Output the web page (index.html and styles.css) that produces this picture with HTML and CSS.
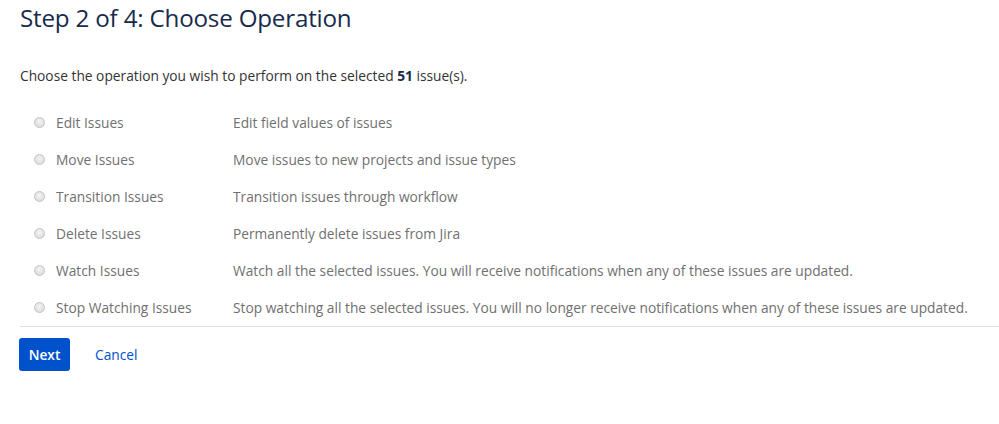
FILE: index.html
```html
<!DOCTYPE html>
<html>
<head>
<meta charset="utf-8">
<link rel="stylesheet" href="styles.css">
</head>
<body>
<div class="page">
  <h1 class="title">Step 2 of 4: Choose Operation</h1>
  <p class="intro">Choose the operation you wish to perform on the selected <strong>51</strong> issue(s).</p>
  <div class="ops">
    <div class="op"><span class="radio"></span><span class="label">Edit Issues</span><span class="desc">Edit field values of issues</span></div>
    <div class="op"><span class="radio"></span><span class="label">Move Issues</span><span class="desc">Move issues to new projects and issue types</span></div>
    <div class="op"><span class="radio"></span><span class="label">Transition Issues</span><span class="desc">Transition issues through workflow</span></div>
    <div class="op"><span class="radio"></span><span class="label">Delete Issues</span><span class="desc">Permanently delete issues from Jira</span></div>
    <div class="op"><span class="radio"></span><span class="label">Watch Issues</span><span class="desc">Watch all the selected issues. You will receive notifications when any of these issues are updated.</span></div>
    <div class="op"><span class="radio"></span><span class="label">Stop Watching Issues</span><span class="desc">Stop watching all the selected issues. You will no longer receive notifications when any of these issues are updated.</span></div>
  </div>
  <div class="actions">
    <button class="btn-primary">Next</button>
    <a class="cancel" href="#">Cancel</a>
  </div>
</div>
</body>
</html>
```
FILE: styles.css
```css
html, body { margin: 0; padding: 0; background: #fff; }
body { font-family: "Open Sans", "Noto Sans", sans-serif; color: #172b4d; }
.page { padding: 0 0 0 20px; }
.title { margin: 0; padding-top: 2px; font-size: 24.2px; font-weight: 400; line-height: 32px; color: #172b4d; letter-spacing: -0.2px; }
.intro { margin: 32px 0 0; font-size: 13.75px; line-height: 20px; color: #333; }
.intro strong { font-weight: 700; color: #172b4d; }
.ops { margin-top: 18px; border-bottom: 1px solid #dfe1e6; }
.op { display: flex; align-items: center; height: 37px; font-size: 13.75px; color: #707070; }
.radio { width: 11px; height: 11px; border-radius: 50%; margin-left: 14px; margin-right: 11px; border: 1px solid #c4c4c4; background: radial-gradient(circle at 50% 40%, #f4f4f4 0%, #dcdcdc 80%); box-sizing: border-box; }
.label { width: 177px; }
.actions { display: flex; align-items: center; margin-top: 11px; }
.btn-primary { font-family: inherit; font-size: 13.75px; font-weight: 600; color: #fff; background: #0052cc; border: 0; border-radius: 3px; height: 33px; width: 51px; padding: 0; margin-left: -1px; }
.cancel { margin-left: 25px; font-size: 13.75px; color: #0052cc; text-decoration: none; }
```
